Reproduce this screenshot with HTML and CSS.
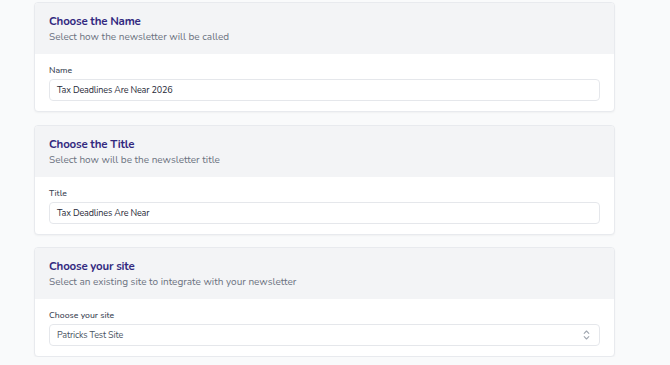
FILE: index.html
```html
<!DOCTYPE html>
<html>
<head>
<meta charset="utf-8">
<link rel="stylesheet" href="styles.css">
</head>
<body>
<div class="page">
  <section class="card">
    <div class="card-head">
      <h2 class="card-title">Choose the Name</h2>
      <p class="card-sub">Select how the newsletter will be called</p>
    </div>
    <div class="card-body">
      <label class="field-label">Name</label>
      <div class="input">Tax Deadlines Are Near 2026</div>
    </div>
  </section>
  <section class="card">
    <div class="card-head">
      <h2 class="card-title">Choose the Title</h2>
      <p class="card-sub">Select how will be the newsletter title</p>
    </div>
    <div class="card-body">
      <label class="field-label">Title</label>
      <div class="input">Tax Deadlines Are Near</div>
    </div>
  </section>
  <section class="card">
    <div class="card-head">
      <h2 class="card-title">Choose your site</h2>
      <p class="card-sub">Select an existing site to integrate with your newsletter</p>
    </div>
    <div class="card-body">
      <label class="field-label">Choose your site</label>
      <div class="input select">
        <span class="select-text">Patricks Test Site</span>
        <svg class="chev" width="7" height="10" viewBox="0 0 7 10" fill="none" stroke="#a1a7b0" stroke-width="1.1" stroke-linecap="round" stroke-linejoin="round"><path d="M1.2 3.3 L3.5 1 L5.8 3.3"/><path d="M1.2 6.7 L3.5 9 L5.8 6.7"/></svg>
      </div>
    </div>
  </section>
</div>
</body>
</html>
```
FILE: styles.css
```css
html, body {
  margin: 0;
  padding: 0;
  background: #f9fafb;
  font-family: "Nunito", "Lato", "Open Sans", sans-serif;
}
.page {
  display: flex;
  flex-direction: column;
  gap: 12.5px;
  padding: 2px 0 0 34px;
  width: 581px;
}
.card {
  background: #ffffff;
  border: 1px solid #e8eaee;
  border-radius: 4px;
  box-shadow: 0 1px 2px rgba(0,0,0,0.04);
  overflow: hidden;
  height: 110px;
  box-sizing: border-box;
}
.card-head {
  background: #f3f4f6;
  padding: 10px 14px 0 14px;
  height: 51px;
  box-sizing: border-box;
}
.card-title {
  margin: 0;
  font-size: 11.5px;
  letter-spacing: -0.2px;
  line-height: 16px;
  font-weight: 700;
  color: #32297f;
}
.card-sub {
  margin: 0;
  font-size: 10px;
  line-height: 14px;
  margin-top: 1px;
  color: #6b7280;
}
.card-body {
  padding: 9px 14px 10px 14px;
  display: flex;
  flex-direction: column;
  gap: 2px;
}
.field-label {
  font-size: 8.7px;
  line-height: 14px;
  color: #374151;
  font-weight: 500;
}
.input {
  height: 22px;
  box-sizing: border-box;
  border: 1px solid #e5e7eb;
  border-radius: 4px;
  padding: 0 7px;
  display: flex;
  align-items: center;
  font-size: 9px;
  letter-spacing: -0.15px;
  color: #1f2937;
  background: #fff;
}
.select {
  justify-content: space-between;
  color: #4b5563;
  padding-right: 9px;
}
.chev { display: block; }
```
